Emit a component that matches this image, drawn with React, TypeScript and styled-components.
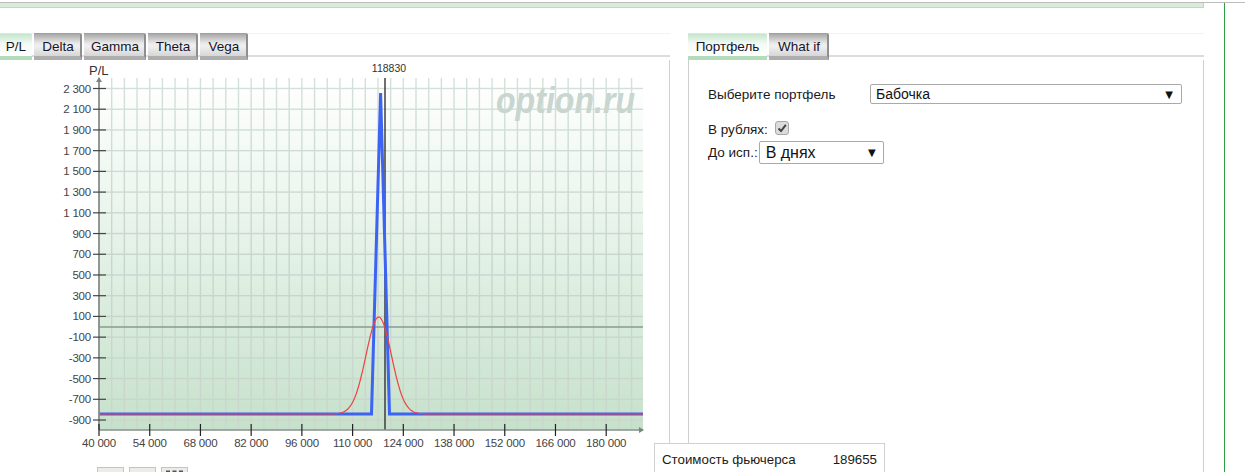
import React from "react";
import styled, { createGlobalStyle } from "styled-components";

const Global = createGlobalStyle`
  html, body { margin: 0; padding: 0; background: #fff; overflow: hidden; }
  body { font-family: "Liberation Sans", Arial, sans-serif; font-size: 14px; color: #111; }
`;

const Page = styled.div`
  position: relative;
  width: 1245px;
  height: 472px;
  overflow: hidden;
  padding-top: 2px;
  box-sizing: border-box;
`;
const TopRule = styled.div`
  height: 1px;
  background: #bdbdbd;
`;
const Frame = styled.div`
  width: 1225px;
  height: 469px;
  box-sizing: border-box;
  border-right: 1px solid #2ea043;
`;
const Strip = styled.div`
  width: 1204px;
  height: 5px;
  box-sizing: border-box;
  background: #d9ebd9;
  border-right: 1px solid #c8d0c8;
  border-bottom: 1px solid #c8d4c8;
`;
const Columns = styled.div`
  display: flex;
  margin-top: 25px;
  height: 439px;
`;
const LeftColumn = styled.div`
  width: 670px;
  flex: none;
  display: flex;
  flex-direction: column;
`;
const RightColumn = styled.div`
  width: 516px;
  flex: none;
  margin-left: 18px;
  display: flex;
  flex-direction: column;
`;
const TabStrip = styled.div`
  display: flex;
  gap: 2px;
  height: 27px;
  flex: none;
  background:
    linear-gradient(#f3f3f3, #f3f3f3) 0 0 / 100% 1px no-repeat,
    linear-gradient(#dcdcdc, #dcdcdc) 0 22px / 100% 2px no-repeat;
`;
const Tab = styled.div<{ $active?: boolean; $w: number }>`
  box-sizing: border-box;
  width: ${(p) => p.$w}px;
  height: 27px;
  padding-left: ${(p) => (p.$active ? "0" : "2px")};
  font-size: 13.5px;
  line-height: 26px;
  text-align: center;
  color: #14142a;
  background: ${(p) =>
    p.$active
      ? "linear-gradient(#c6e6ce 0, #f4faf5 45%, #ffffff 100%)"
      : "linear-gradient(#a9a9a9 0, #e9e9e9 42%, #f0f0f0 55%, #d6d6d6 100%)"};
  border-bottom: 4px solid ${(p) => (p.$active ? "#b4dcbc" : "#aeaeae")};
  border-right: ${(p) => (p.$active ? "0" : "2px solid #8f8f8f")};
  border-top: 1px solid ${(p) => (p.$active ? "#d8ecdc" : "#a0a0a0")};
  border-top-right-radius: 2px;
`;
const LeftPanel = styled.div`
  flex: 1;
  border-right: 1px solid #cfcfcf;
  min-height: 0;
`;
const ChartSvg = styled.svg`
  display: block;
  width: 669px;
  height: 405px;
`;
const PagerRow = styled.div`
  display: flex;
  gap: 5px;
  margin: 2px 0 0 97px;
`;
const PagerButton = styled.div`
  width: 27px;
  height: 12px;
  box-sizing: border-box;
  display: flex;
  justify-content: center;
  padding-top: 2px;
  background: #ecece8;
  border: 1px solid #c4c4c4;
  border-bottom: 0;
`;
const RightPanel = styled.div`
  flex: 1;
  border-left: 1px solid #cfcfcf;
  border-right: 1px solid #cfcfcf;
  padding: 24px 21px 0 19px;
`;
const PortfolioRow = styled.div`
  display: flex;
  align-items: center;
  height: 20px;
`;
const PortfolioLabel = styled.div`
  width: 162px;
  font-size: 13.5px;
  color: #1a1a1a;
`;
const Select = styled.div<{ $big?: boolean }>`
  box-sizing: border-box;
  display: flex;
  align-items: center;
  justify-content: space-between;
  border: 1px solid #a9a9a9;
  border-radius: 2px;
  background: #fff;
  color: #111;
  padding: 0 ${(p) => (p.$big ? "7px" : "8px")} 0 ${(p) => (p.$big ? "6px" : "5px")};
  font-size: ${(p) => (p.$big ? "16px" : "14px")};
  width: ${(p) => (p.$big ? "125px" : "312px")};
  height: ${(p) => (p.$big ? "23px" : "20px")};
`;
const Caret = styled.span`
  font-family: "DejaVu Sans", sans-serif;
  font-size: 10px;
  color: #111;
`;
const CheckRow = styled.div`
  display: flex;
  align-items: center;
  gap: 7px;
  margin-top: 18px;
  height: 14px;
  font-size: 13.5px;
  color: #1a1a1a;
`;
const CheckBox = styled.span`
  width: 14px;
  height: 14px;
  box-sizing: border-box;
  display: flex;
  align-items: center;
  justify-content: center;
  border: 1px solid #a8a8a8;
  border-radius: 3px;
  background: #dcdcdc;
  position: relative;
  top: -1px;
`;
const ExpiryRow = styled.div`
  display: flex;
  align-items: center;
  gap: 1px;
  margin-top: 5px;
  font-size: 13.5px;
  color: #1a1a1a;
`;
const FooterCard = styled.div`
  position: absolute;
  left: 654px;
  top: 443px;
  width: 231px;
  height: 40px;
  box-sizing: border-box;
  background: #fff;
  border: 1px solid #d0d0d0;
  padding: 8px 7px 0 7px;
  display: flex;
  justify-content: space-between;
  font-size: 13.3px;
  color: #1a1a1a;
`;

const yLabels = ["2 300","2 100","1 900","1 700","1 500","1 300","1 100","900","700","500","300","100","-100","-300","-500","-700","-900"];
const xLabels = ["40 000","54 000","68 000","82 000","96 000","110 000","124 000","138 000","152 000","166 000","180 000"];

// Chart coordinates are relative to the svg, which begins at page y = 60.
const T = 18, B = 370, L = 99, R = 643;
const yTick = (i: number) => 28.5 + i * 20.72;
const xTick = (i: number) => L + i * 50.72;
const base = 354;
const curve = Array.from({ length: 141 }, (_, i) => {
  const x = 318 + i;
  const y = base - 97 * Math.exp(-((x - 378.7) ** 2) / (2 * 12.7 ** 2));
  return `${x},${y.toFixed(2)}`;
}).join(" ");

function Chart() {
  const verticals = Array.from({ length: 43 }, (_, i) => L + i * 12.68).filter((x) => x < R);
  return (
    <ChartSvg viewBox="0 0 669 405">
      <defs>
        <linearGradient id="plotBg" x1="0" y1="0" x2="0" y2="1">
          <stop offset="0" stopColor="#ffffff" />
          <stop offset="0.35" stopColor="#ecf6ee" />
          <stop offset="1" stopColor="#c6e1cb" />
        </linearGradient>
        <linearGradient id="gridLine" gradientUnits="userSpaceOnUse" x1="0" y1={T} x2="0" y2={B}>
          <stop offset="0" stopColor="#d3e1da" />
          <stop offset="0.5" stopColor="#c7d6cd" />
          <stop offset="1" stopColor="#cbd6cd" />
        </linearGradient>
      </defs>
      <rect x={L} y={T} width={R - L} height={B - T} fill="url(#plotBg)" />
      {verticals.map((x) => (
        <line key={x} x1={x} x2={x} y1={T} y2={B} stroke="url(#gridLine)" strokeWidth="1.4" />
      ))}
      {yLabels.map((l, i) => (
        <rect key={l} x={L} width={R - L} y={yTick(i) - 0.7} height="1.4" fill="url(#gridLine)" />
      ))}
      <text
        x="496"
        y="52.7"
        textLength="139"
        lengthAdjust="spacingAndGlyphs"
        fontFamily="Liberation Sans"
        fontWeight="700"
        fontStyle="italic"
        fontSize="36"
        fill="#c9d5cf"
      >
        option.ru
      </text>
      <line x1={L} x2={R} y1="267" y2="267" stroke="#8b9a90" strokeWidth="1.4" />
      <line x1="385" x2="385" y1={T} y2={B} stroke="#333" strokeWidth="1.4" />
      <polyline points={`${L},${base} 371.5,${base} 380.6,33 389.5,${base} ${R},${base}`} fill="none" stroke="#3d63f2" strokeWidth="3" />
      <polyline points={`${L},${base} 318,${base} ${curve} ${R},${base}`} fill="none" stroke="#f0403f" strokeWidth="1.2" />
      <line x1={L} x2={R} y1={B} y2={B} stroke="#8a8f8b" strokeWidth="1.6" />
      <line x1={L} x2={L} y1={T} y2={B} stroke="#8a8f8b" strokeWidth="1.8" />
      <path d={`M${L - 3},${T + 4} L${L},${T - 1} L${L + 3},${T + 4} Z`} fill="#7d8480" />
      <path d={`M${R - 4},${B - 3} L${R + 1},${B} L${R - 4},${B + 3} Z`} fill="#7d8480" />
      {yLabels.map((l, i) => (
        <g key={l}>
          <line x1="93" x2="106" y1={yTick(i)} y2={yTick(i)} stroke="#444" strokeWidth="1.2" />
          <text x="91" y={yTick(i) + 4} textAnchor="end" fontFamily="Liberation Sans" fontSize="11.5" letterSpacing="-0.2" fill="#444">{l}</text>
        </g>
      ))}
      {xLabels.map((l, i) => (
        <g key={l}>
          <line x1={xTick(i)} x2={xTick(i)} y1="364" y2="376" stroke="#222" strokeWidth="1.2" />
          <text x={xTick(i)} y="387" textAnchor="middle" fontFamily="Liberation Sans" fontSize="11.5" letterSpacing="-0.2" fill="#444">{l}</text>
        </g>
      ))}
      <text x="89" y="15" fontFamily="Liberation Sans" fontSize="13" fill="#333">P/L</text>
      <text x="389" y="12" textAnchor="middle" fontFamily="Liberation Sans" fontSize="10.5" fill="#333">118830</text>
    </ChartSvg>
  );
}

export default function App() {
  return (
    <Page>
      <Global />
      <TopRule />
      <Frame>
        <Strip />
        <Columns>
          <LeftColumn>
            <TabStrip>
              <Tab $active $w={32}>P/L</Tab>
              <Tab $w={48}>Delta</Tab>
              <Tab $w={62}>Gamma</Tab>
              <Tab $w={50}>Theta</Tab>
              <Tab $w={48}>Vega</Tab>
            </TabStrip>
            <LeftPanel>
              <Chart />
              <PagerRow>
                <PagerButton />
                <PagerButton />
                <PagerButton>
                  <svg width="17" height="3" viewBox="0 0 17 3">
                    <path d="M0 1.5H4M6.5 1.5H10.5M13 1.5H17" stroke="#555" strokeWidth="2" />
                  </svg>
                </PagerButton>
              </PagerRow>
            </LeftPanel>
          </LeftColumn>
          <RightColumn>
            <TabStrip>
              <Tab $active $w={79}>Портфель</Tab>
              <Tab $w={60}>What if</Tab>
            </TabStrip>
            <RightPanel>
              <PortfolioRow>
                <PortfolioLabel>Выберите портфель</PortfolioLabel>
                <Select>
                  Бабочка
                  <Caret>▼</Caret>
                </Select>
              </PortfolioRow>
              <CheckRow>
                В рублях:
                <CheckBox>
                  <svg width="10" height="10" viewBox="0 0 10 10">
                    <path d="M1.5 5.5 L4 8 L8.8 1.8" fill="none" stroke="#444" strokeWidth="2" />
                  </svg>
                </CheckBox>
              </CheckRow>
              <ExpiryRow>
                До исп.:
                <Select $big>
                  В днях
                  <Caret>▼</Caret>
                </Select>
              </ExpiryRow>
            </RightPanel>
          </RightColumn>
        </Columns>
      </Frame>
      <FooterCard>
        <span>Стоимость фьючерса</span>
        <span>189655</span>
      </FooterCard>
    </Page>
  );
}
